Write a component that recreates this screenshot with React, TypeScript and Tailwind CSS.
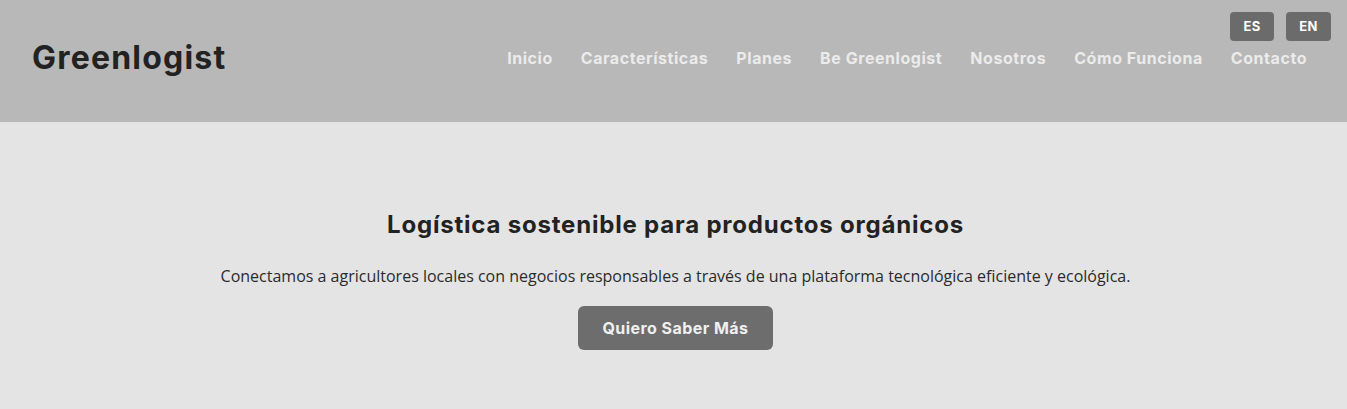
import React from 'react'

const links = ['Inicio', 'Características', 'Planes', 'Be Greenlogist', 'Nosotros', 'Cómo Funciona', 'Contacto']

const heading = { fontFamily: 'Inter, "Liberation Sans", sans-serif' }

export default function App() {
  return (
    <div className="min-h-screen bg-[#e4e4e4]" style={heading}>
      <header className="relative h-[122px] bg-[#b8b8b8] flex items-center justify-between pl-8 pr-10">
        <div className="text-[32px] font-bold text-[#222222] tracking-[1.2px] pb-[6px]">Greenlogist</div>
        <nav className="flex items-center gap-7 pb-[6px]">
          {links.map((l) => (
            <a key={l} href="#" className="text-[16px] font-bold text-[#ebebeb] tracking-[0.55px]">
              {l}
            </a>
          ))}
        </nav>
        <div className="absolute top-3 right-4 flex gap-3">
          <button className="w-[44px] h-[29px] rounded bg-[#6b6b6b] text-white text-[13px] font-bold tracking-[0.3px]">ES</button>
          <button className="w-[45px] h-[29px] rounded bg-[#6b6b6b] text-white text-[13px] font-bold tracking-[0.3px]">EN</button>
        </div>
      </header>
      <main className="flex flex-col items-center pt-[88px] pl-[4px]">
        <h1 className="text-[24px] font-bold text-[#222222] leading-[30px] tracking-[0.8px]">
          Logística sostenible para productos orgánicos
        </h1>
        <p
          className="mt-[25px] text-[16px] text-[#2b2b2b] leading-[22px]"
          style={{ fontFamily: '"Open Sans", sans-serif' }}
        >
          Conectamos a agricultores locales con negocios responsables a través de una plataforma tecnológica eficiente y ecológica.
        </p>
        <button className="mt-[19px] w-[195px] h-[44px] rounded-md bg-[#6d6d6d] text-[#f0f0f0] text-[16px] font-bold tracking-[0.45px]">
          Quiero Saber Más
        </button>
      </main>
    </div>
  )
}
